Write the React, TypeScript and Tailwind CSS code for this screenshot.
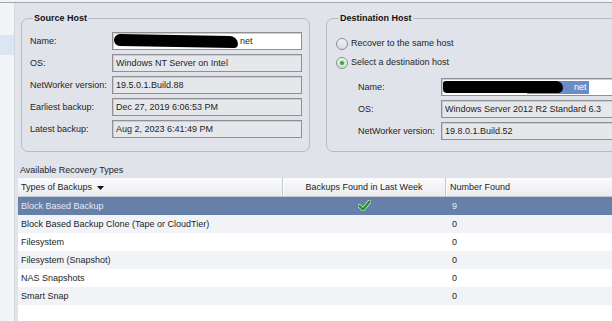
import React from 'react';

const FONT = { fontFamily: '"Liberation Sans", Arial, sans-serif' };

function Field({ children, white = false }: { children?: React.ReactNode; white?: boolean }) {
    return (
        <div
            className={`relative h-[18px] flex-1 flex items-center pl-[3px] pt-[2px] border border-[#8e9094] shadow-[inset_1px_1px_0_#c9ccd1] overflow-hidden whitespace-nowrap ${white ? 'bg-white' : 'bg-[#e5e7eb]'}`}
        >
            {children}
        </div>
    );
}

function Row({ label, labelWidth, children }: { label: string; labelWidth: string; children: React.ReactNode }) {
    return (
        <div className="flex items-center">
            <div className={`${labelWidth} shrink-0 pt-[2px]`}>{label}</div>
            {children}
        </div>
    );
}

function Radio({ checked, label }: { checked?: boolean; label: string }) {
    return (
        <div className="flex items-center gap-[3px] h-[14px]">
            <div className="w-[12px] h-[12px] rounded-full border border-[#8b8e94] bg-gradient-to-b from-[#f2f3f5] to-[#d9dce1] flex items-center justify-center">
                {checked && <div className="w-[4px] h-[4px] rounded-full bg-[#2fb32f] shadow-[0_0_1px_1px_#bfe8bf]" />}
            </div>
            <span>{label}</span>
        </div>
    );
}

function Check() {
    return (
        <svg width="13" height="11" viewBox="0 0 13 11">
            <path d="M1.5 6 L5 9.5 L11.5 1.5" fill="none" stroke="#d9e6d4" strokeWidth="3.8" strokeLinecap="round" strokeLinejoin="round" />
            <path d="M1.5 6 L5 9.5 L11.5 1.5" fill="none" stroke="#1c9427" strokeWidth="2.4" strokeLinecap="round" strokeLinejoin="round" />
        </svg>
    );
}

const backupTypes = [
    { name: 'Block Based Backup', found: true, count: '9' },
    { name: 'Block Based Backup Clone (Tape or CloudTier)', found: false, count: '0' },
    { name: 'Filesystem', found: false, count: '0' },
    { name: 'Filesystem (Snapshot)', found: false, count: '0' },
    { name: 'NAS Snapshots', found: false, count: '0' },
    { name: 'Smart Snap', found: false, count: '0' },
];

export default function App() {
    return (
        <div className="w-[612px] h-[321px] overflow-hidden flex flex-col bg-[#e0e3ea] text-[9px] text-[#1e1e1e]" style={FONT}>
            {/* top edge */}
            <div className="h-[2px] bg-[#f2f3f6] shrink-0" />
            <div className="h-[1px] bg-[#a2a5ab] shrink-0" />

            <div className="flex flex-1 min-h-0">
                {/* left navigation strip */}
                <div className="w-[15px] shrink-0 bg-[#f2f4f8] border-r border-[#d3d7de] flex flex-col">
                    <div className="mt-[32px] h-[20px] bg-[#dce5f4]" />
                </div>

                {/* main */}
                <div className="flex-1 min-w-0 flex flex-col">
                    <div className="flex mt-[9px] gap-[16px] pl-[6px] -mr-[40px]">
                        {/* Source Host */}
                        <fieldset className="w-[289px] h-[140px] shrink-0 border border-[#b8bbc2] rounded-[7px] pl-[8px] pr-[7px]">
                            <legend className="ml-[3px] px-[1px] font-bold leading-[12px] text-[#111]">Source Host</legend>
                            <div className="flex flex-col gap-[4px] pt-[8px]">
                                <Row label="Name:" labelWidth="w-[82px]">
                                    <Field white>
                                        <div className="absolute left-[1px] top-[2px] w-[124px] h-[12px] bg-black rounded-[6px_8px_4px_6px] rotate-[1deg]" />
                                        <span className="ml-[124px]">net</span>
                                    </Field>
                                </Row>
                                <Row label="OS:" labelWidth="w-[82px]">
                                    <Field>Windows NT Server on Intel</Field>
                                </Row>
                                <Row label="NetWorker version:" labelWidth="w-[82px]">
                                    <Field>19.5.0.1.Build.88</Field>
                                </Row>
                                <Row label="Earliest backup:" labelWidth="w-[82px]">
                                    <Field>Dec 27, 2019 6:06:53 PM</Field>
                                </Row>
                                <Row label="Latest backup:" labelWidth="w-[82px]">
                                    <Field>Aug 2, 2023 6:41:49 PM</Field>
                                </Row>
                            </div>
                        </fieldset>

                        {/* Destination Host */}
                        <fieldset className="flex-1 h-[140px] border border-[#b8bbc2] rounded-[7px] pl-[9px]">
                            <legend className="ml-[3px] px-[1px] font-bold leading-[12px] text-[#111]">Destination Host</legend>
                            <div className="flex flex-col pt-[13px] gap-[5px]">
                                <Radio label="Recover to the same host" />
                                <Radio checked label="Select a destination host" />
                            </div>
                            <div className="flex flex-col gap-[4px] pt-[8px] pl-[22px]">
                                <Row label="Name:" labelWidth="w-[83px]">
                                    <Field white>
                                        <div className="absolute left-[85px] top-[2px] w-[62px] h-[13px] bg-[#6b8dc6]" />
                                        <div className="absolute left-[1px] top-[2px] w-[120px] h-[12px] bg-black rounded-[4px_10px_8px_6px]" />
                                        <span className="relative ml-[129px] text-white">net</span>
                                    </Field>
                                </Row>
                                <Row label="OS:" labelWidth="w-[83px]">
                                    <Field>Windows Server 2012 R2 Standard 6.3</Field>
                                </Row>
                                <Row label="NetWorker version:" labelWidth="w-[83px]">
                                    <Field>19.8.0.1.Build.52</Field>
                                </Row>
                            </div>
                        </fieldset>
                    </div>

                    <div className="mt-[12px] ml-[5px] leading-[12px]">Available Recovery Types</div>

                    {/* table */}
                    <div className="mt-[2px] ml-[3px] flex-1 flex flex-col bg-white">
                        <div className="h-[19px] flex items-center bg-gradient-to-b from-[#fbfbfc] to-[#eaecef] border-b border-[#c3c6cc] shrink-0">
                            <div className="w-[265px] shrink-0 h-full flex items-center pl-[3px] pt-[2px] gap-[5px] border-r border-[#c4c7cc] shadow-[1px_0_0_#ffffff]">
                                <span>Types of Backups</span>
                                <svg width="7" height="4" viewBox="0 0 7 4">
                                    <path d="M0 0 H7 L3.5 4 Z" fill="#111" />
                                </svg>
                            </div>
                            <div className="w-[163px] shrink-0 h-full flex items-center justify-center pt-[2px] border-r border-[#c4c7cc] shadow-[1px_0_0_#ffffff]">
                                Backups Found in Last Week
                            </div>
                            <div className="flex-1 pl-[4px] pt-[2px]">Number Found</div>
                        </div>

                        {backupTypes.map((t, i) => (
                            <div
                                key={t.name}
                                className={`h-[18px] flex items-center shrink-0 pt-[2px] ${i === 0 ? 'bg-[#6680aa] text-[#e4e9f2]' : i % 2 === 1 ? 'bg-[#f1f3f7]' : 'bg-white'}`}
                            >
                                <div className="w-[265px] shrink-0 pl-[3px]">{t.name}</div>
                                <div className="w-[163px] shrink-0 flex justify-center pb-[4px]">
                                    {t.found && <Check />}
                                </div>
                                <div className="flex-1 pl-[6px]">{t.count}</div>
                            </div>
                        ))}
                    </div>
                </div>
            </div>
        </div>
    );
}
